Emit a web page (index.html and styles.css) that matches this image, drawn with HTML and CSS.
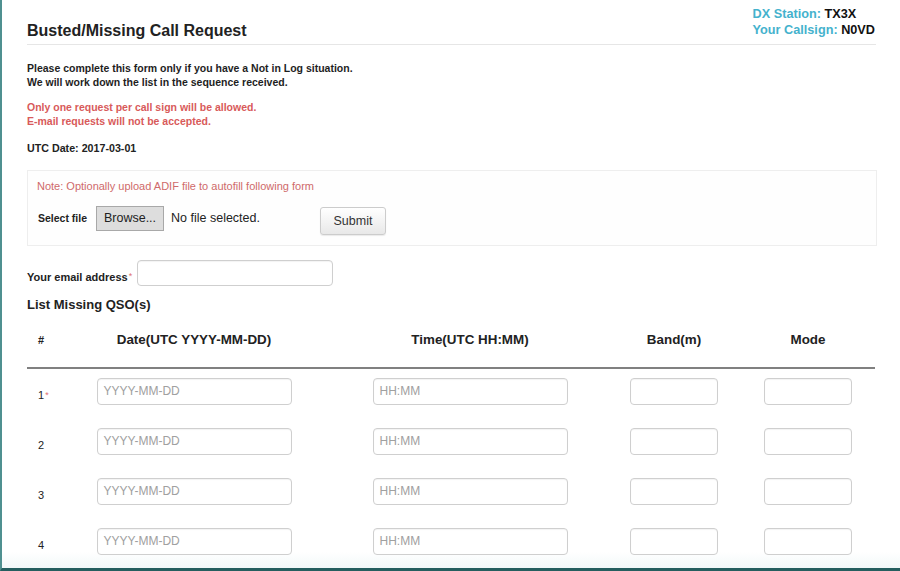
FILE: index.html
```html
<!DOCTYPE html>
<html>
<head>
<meta charset="utf-8">
<link rel="stylesheet" href="styles.css">
</head>
<body>
<div class="page">
  <div class="content">
    <div class="header">
      <h1 class="title">Busted/Missing Call Request</h1>
      <div class="station">
        <div><span class="key">DX Station:</span> TX3X</div>
        <div><span class="key">Your Callsign:</span> N0VD</div>
      </div>
    </div>

    <p class="intro">Please complete this form only if you have a Not in Log situation.<br>We will work down the list in the sequence received.</p>
    <p class="warn">Only one request per call sign will be allowed.<br>E-mail requests will not be accepted.</p>
    <p class="utc">UTC Date: 2017-03-01</p>

    <div class="panel">
      <div class="note">Note: Optionally upload ADIF file to autofill following form</div>
      <div class="file-row">
        <span class="lbl">Select file</span>
        <span class="browse">Browse...</span>
        <span class="nofile">No file selected.</span>
        <span class="submit">Submit</span>
      </div>
    </div>

    <div class="email-row">
      <span class="lbl">Your email address<span class="req">*</span></span>
      <span class="input email"></span>
    </div>

    <h2 class="list-title">List Missing QSO(s)</h2>

    <div class="table">
      <div class="thead">
        <div class="th num">#</div>
        <div class="th">Date(UTC YYYY-MM-DD)</div>
        <div class="th">Time(UTC HH:MM)</div>
        <div class="th">Band(m)</div>
        <div class="th">Mode</div>
      </div>
      <div class="tr">
        <div class="td num">1<span class="req">*</span></div>
        <div class="td"><span class="input date">YYYY-MM-DD</span></div>
        <div class="td"><span class="input time">HH:MM</span></div>
        <div class="td"><span class="input small"></span></div>
        <div class="td"><span class="input small"></span></div>
      </div>
      <div class="tr">
        <div class="td num">2</div>
        <div class="td"><span class="input date">YYYY-MM-DD</span></div>
        <div class="td"><span class="input time">HH:MM</span></div>
        <div class="td"><span class="input small"></span></div>
        <div class="td"><span class="input small"></span></div>
      </div>
      <div class="tr">
        <div class="td num">3</div>
        <div class="td"><span class="input date">YYYY-MM-DD</span></div>
        <div class="td"><span class="input time">HH:MM</span></div>
        <div class="td"><span class="input small"></span></div>
        <div class="td"><span class="input small"></span></div>
      </div>
      <div class="tr">
        <div class="td num">4</div>
        <div class="td"><span class="input date">YYYY-MM-DD</span></div>
        <div class="td"><span class="input time">HH:MM</span></div>
        <div class="td"><span class="input small"></span></div>
        <div class="td"><span class="input small"></span></div>
      </div>
    </div>
  </div>
</div>
</body>
</html>
```

FILE: styles.css
```css
html, body {
  margin: 0;
  padding: 0;
  background: #ffffff;
}

body {
  font-family: "Liberation Sans", Arial, sans-serif;
  color: #222222;
}

.page {
  box-sizing: border-box;
  width: 900px;
  height: 571px;
  overflow: hidden;
  border-left: 2px solid #4f9090;
  border-bottom: 3px solid #255e5f;
  background: linear-gradient(to bottom, #ffffff 0, #ffffff 552px, #f2f8f9 568px);
}

.content {
  margin: 0 24px 0 25px;
}

.header {
  display: flex;
  justify-content: space-between;
  align-items: flex-end;
  border-bottom: 1px solid #e6e6e6;
  padding-top: 6px;
}

.title {
  margin: 0;
  font-size: 16px;
  line-height: 20px;
  font-weight: bold;
  color: #222222;
  padding-bottom: 3px;
}

.station {
  font-size: 12.7px;
  line-height: 16px;
  font-weight: bold;
  color: #111111;
  padding-bottom: 6px;
  margin-right: 1px;
}

.key {
  color: #45b2cd;
}

.intro, .warn, .utc {
  margin: 0;
  font-size: 10.5px;
  line-height: 14px;
  font-weight: bold;
}

.intro {
  margin-top: 16px;
  color: #1e1e1e;
}

.warn {
  margin-top: 11px;
  color: #d85a5a;
}

.utc {
  margin-top: 13px;
  font-size: 10.7px;
}

.panel {
  margin-top: 15px;
  width: 850px;
  box-sizing: border-box;
  height: 76px;
  border: 1px solid #eeeeee;
  background: #fefefe;
  padding: 8px 9px 0 9px;
}

.note {
  font-size: 11px;
  line-height: 14px;
  color: #cf6a6a;
}

.file-row {
  display: flex;
  align-items: flex-start;
  margin-top: 13px;
  padding-left: 1px;
}

.lbl {
  font-size: 10.5px;
  font-weight: bold;
  line-height: 25px;
  color: #222222;
}

.browse {
  margin-left: 9px;
  box-sizing: border-box;
  width: 68px;
  height: 25px;
  background: #dddddd;
  border: 1px solid #a8a8a8;
  font-size: 12.5px;
  line-height: 23px;
  text-align: center;
  color: #222222;
}

.nofile {
  margin-left: 7px;
  font-size: 12.5px;
  line-height: 25px;
  color: #222222;
}

.submit {
  margin-left: 60px;
  margin-top: 1px;
  box-sizing: border-box;
  width: 66px;
  height: 28px;
  border: 1px solid #cccccc;
  border-radius: 3px;
  background: linear-gradient(to bottom, #ffffff, #e8e8e8);
  box-shadow: 0 1px 1px rgba(0, 0, 0, 0.08);
  font-size: 12.5px;
  line-height: 26px;
  text-align: center;
  color: #333333;
}

.email-row {
  display: flex;
  align-items: flex-start;
  margin-top: 14px;
}

.email-row .lbl {
  font-size: 11px;
  line-height: 26px;
  padding-top: 3px;
}

.req {
  color: #e07070;
  font-weight: normal;
  font-size: 9px;
  vertical-align: 2px;
  margin-left: 1px;
}

.input {
  display: inline-block;
  box-sizing: border-box;
  height: 27px;
  border: 1px solid #cfcfcf;
  border-radius: 4px;
  background: #ffffff;
  box-shadow: inset 0 1px 1px rgba(0, 0, 0, 0.05);
  font-size: 12px;
  line-height: 25px;
  padding-left: 6px;
  color: #a0a0a0;
  vertical-align: top;
}

.email {
  margin-left: 5px;
  width: 196px;
  height: 26px;
}

.list-title {
  margin: 6px 0 0 0;
  font-size: 13px;
  line-height: 18px;
  font-weight: bold;
  color: #222222;
}

.table {
  width: 848px;
}

.thead, .tr {
  display: grid;
  grid-template-columns: 28px 278px 274px 134px 134px;
}

.thead {
  height: 43px;
  padding-top: 10px;
  border-bottom: 2px solid #808080;
}

.th {
  font-size: 13.4px;
  font-weight: bold;
  line-height: 16px;
  text-align: center;
  color: #222222;
  padding-top: 8px;
}

.th.num {
  text-align: left;
  padding-left: 11px;
  font-size: 11px;
}

.tr {
  padding: 9px 0 14px 0;
}

.td {
  display: flex;
  justify-content: center;
}

.td.num {
  justify-content: flex-start;
  padding-left: 11px;
  padding-top: 10px;
  font-size: 11px;
  line-height: 14px;
  color: #222222;
}

.date, .time {
  width: 195px;
}

.small {
  width: 88px;
}
```
